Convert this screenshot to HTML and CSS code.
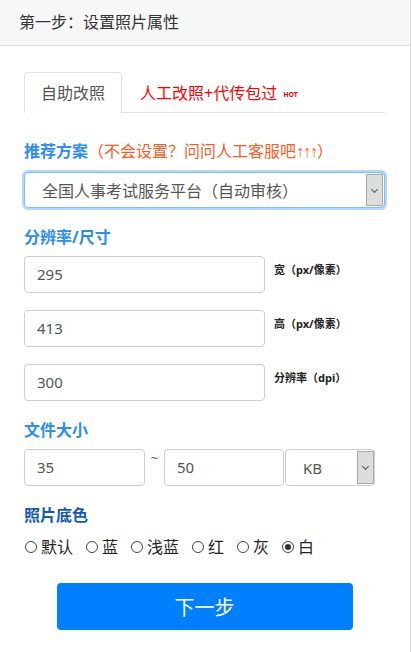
FILE: index.html
```html
<!DOCTYPE html>
<html lang="zh-CN">
<head>
    <meta charset="UTF-8">
    <meta name="viewport" content="width=device-width, initial-scale=1.0">
    <title>设置照片属性</title>
    <link rel="stylesheet" href="styles.css">
</head>
<body>
    <div class="page">
        <div class="page-header">第一步：设置照片属性</div>

        <div class="page-body">
            <div class="tabs">
                <div class="tab active">自助改照</div>
                <div class="tab tab-hot">人工改照+代传包过<span class="hot">HOT</span></div>
            </div>

            <div class="field-title first">推荐方案<span class="tip">（不会设置？问问人工客服吧<span class="arrows">↑↑↑</span>）</span></div>
            <div class="select select-focus">
                <span class="select-text">全国人事考试服务平台（自动审核）</span>
                <span class="select-arrow"></span>
            </div>

            <div class="field-title">分辨率/尺寸</div>
            <div class="size-row">
                <div class="input">295</div>
                <span class="unit">宽（px/像素）</span>
            </div>
            <div class="size-row">
                <div class="input">413</div>
                <span class="unit">高（px/像素）</span>
            </div>
            <div class="size-row">
                <div class="input">300</div>
                <span class="unit">分辨率（dpi）</span>
            </div>

            <div class="field-title">文件大小</div>
            <div class="filesize-row">
                <div class="input input-min">35</div>
                <span class="tilde">~</span>
                <div class="input input-max">50</div>
                <div class="select select-unit">
                    <span class="select-text">KB</span>
                    <span class="select-arrow"></span>
                </div>
            </div>

            <div class="field-title dark">照片底色</div>
            <div class="radios">
                <label class="radio"><span class="dot"></span>默认</label>
                <label class="radio"><span class="dot"></span>蓝</label>
                <label class="radio"><span class="dot"></span>浅蓝</label>
                <label class="radio"><span class="dot"></span>红</label>
                <label class="radio"><span class="dot"></span>灰</label>
                <label class="radio checked"><span class="dot"></span>白</label>
            </div>

            <div class="actions">
                <button class="next-button">下一步</button>
            </div>
        </div>
    </div>
</body>
</html>
```

FILE: styles.css
```css
* {
    margin: 0;
    padding: 0;
    box-sizing: border-box;
}

body {
    font-family: "Noto Sans", "Noto Sans CJK SC", sans-serif;
    background: #fff;
    color: #333;
}

.page {
    width: 411px;
    min-height: 652px;
    border-right: 1px solid #ddd;
}

.page-header {
    height: 46px;
    padding: 11px 0 0 19px;
    background: #f7f7f7;
    border-bottom: 1px solid #ddd;
    font-size: 16px;
    line-height: 22px;
    color: #333;
}

.page-body {
    padding: 26px 25px 0 24px;
}

.tabs {
    display: flex;
    align-items: flex-end;
    border-bottom: 1px solid #dee2e6;
    height: 41px;
}

.tab {
    height: 41px;
    padding: 0 16px;
    font-size: 16px;
    line-height: 40px;
    color: #555;
    border: 1px solid transparent;
    border-radius: 4px 4px 0 0;
    margin-bottom: -1px;
}

.tab.active {
    border-color: #dee2e6 #dee2e6 #fff;
    background: #fff;
}

.tab-hot {
    color: #f00;
    padding-left: 17px;
}

.hot {
    font-size: 7px;
    font-weight: bold;
    margin-left: 6px;
    vertical-align: 2px;
}

.field-title {
    margin-top: 18px;
    font-size: 16px;
    line-height: 22px;
    font-weight: bold;
    color: #2d8cf0;
}

.field-title.first {
    margin-top: 27px;
}

.field-title.dark {
    color: #1559b0;
}

.tip {
    font-weight: normal;
    color: #ff5a1f;
}

.arrows {
    font-family: "Liberation Sans", "DejaVu Sans", sans-serif;
    font-size: 16px;
    letter-spacing: -1px;
}

.select {
    display: flex;
    align-items: center;
    height: 37px;
    border: 1px solid #ccd;
    border-radius: 4px;
    background: #fff;
    padding: 1px;
}

.select-focus {
    margin-top: 9px;
    height: 36px;
    border-color: #80bdff;
    box-shadow: 0 0 0 2px #b3d7ff;
}

.select-text {
    flex: 1;
    padding-left: 16px;
    font-size: 16px;
    color: #555;
}

.select-arrow {
    width: 17px;
    height: 100%;
    background: #ddd;
    border: 1px solid #aaa;
    position: relative;
}

.select-arrow:after {
    content: "";
    position: absolute;
    left: 5px;
    top: 12px;
    width: 4px;
    height: 4px;
    border-right: 1px solid #555;
    border-bottom: 1px solid #555;
    transform: rotate(45deg);
}

.field-title + .size-row {
    margin-top: 8px;
}

.size-row {
    display: flex;
    align-items: flex-start;
    margin-top: 17px;
}

.input {
    height: 37px;
    border: 1px solid #ccd;
    border-radius: 4px;
    padding: 0 12px;
    font-size: 15px;
    line-height: 35px;
    color: #555;
}

.size-row .input {
    width: 241px;
}

.unit {
    margin: 5px 0 0 9px;
    font-size: 11px;
    font-weight: bold;
    color: #222;
}

.filesize-row {
    display: flex;
    align-items: flex-start;
    margin-top: 8px;
}

.input-min {
    width: 121px;
}

.tilde {
    width: 19px;
    text-align: center;
    font-size: 13px;
    color: #555;
    line-height: 18px;
}

.input-max {
    width: 120px;
}

.select-unit {
    width: 90px;
    margin-left: 1px;
    padding-right: 0;
}

.select-unit .select-text {
    font-size: 15px;
}

.radios {
    display: flex;
    gap: 12px;
    margin-top: 10px;
}

.radio {
    display: flex;
    align-items: center;
    font-size: 16px;
    line-height: 22px;
    color: #222;
}

.dot {
    width: 12px;
    height: 12px;
    border: 1px solid #444;
    border-radius: 50%;
    margin: 0 4px 0 1px;
    position: relative;
}

.radio.checked .dot:after {
    content: "";
    position: absolute;
    left: 2px;
    top: 2px;
    width: 6px;
    height: 6px;
    border-radius: 50%;
    background: #333;
}

.actions {
    display: flex;
    justify-content: center;
    margin-top: 25px;
}

.next-button {
    width: 296px;
    height: 47px;
    border: none;
    border-radius: 4px;
    background: #007fff;
    color: #fff;
    font-family: inherit;
    font-size: 20px;
}
```
